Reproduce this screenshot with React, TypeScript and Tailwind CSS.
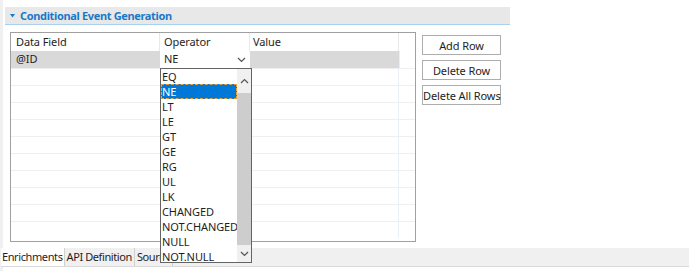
import React from 'react';

const operators = ['EQ', 'NE', 'LT', 'LE', 'GT', 'GE', 'RG', 'UL', 'LK', 'CHANGED', 'NOT.CHANGED', 'NULL', 'NOT.NULL'];

const Chevron: React.FC<{ up?: boolean }> = ({ up }) => (
  <svg width="9" height="6" viewBox="0 0 9 6" className={up ? 'rotate-180' : ''}>
    <path d="M1 1l3.5 3.5L8 1" fill="none" stroke="#555" strokeWidth="1.2" />
  </svg>
);

const App: React.FC = () => {
  const emptyRows = Array.from({ length: 10 });

  return (
    <div
      className="relative w-[689px] h-[271px] bg-white overflow-hidden text-[11px] tracking-[-0.1px] text-[#1e1e1e]"
      style={{ fontFamily: '"Noto Sans", sans-serif' }}
    >
      <div className="flex h-full">
        {/* left edge strip */}
        <div className="w-[3px] h-full bg-[#f0f0f0]" />
        <div className="flex-1 flex flex-col">
          {/* Section header */}
          <div className="ml-[2px] mt-[7px] w-[505px] h-[18px] bg-[#e8e8e8] border-b border-[#a8d0f0] flex items-center pl-[5px]">
            <svg width="5" height="4" viewBox="0 0 5 4" className="mr-[5px]">
              <path d="M0 0h5L2.5 3.5z" fill="#1a78c8" />
            </svg>
            <span className="font-bold text-[#1a78c8] text-[11px] tracking-[-0.35px] leading-none">Conditional Event Generation</span>
          </div>

          <div className="flex mt-[7px]">
            {/* Table */}
            <div className="ml-[7px] w-[406px] h-[210px] border border-[#a0a0a0] flex flex-col">
              <div className="flex h-[18px] items-center">
                <div className="w-[149px] pl-[5px] border-r border-[#e8e8e8] h-full flex items-center">Data Field</div>
                <div className="w-[90px] pl-[4px] border-r border-[#e8e8e8] h-full flex items-center">Operator</div>
                <div className="w-[149px] pl-[3px] border-r border-[#e8e8e8] h-full flex items-center">Value</div>
              </div>
              <div className="flex h-[17px] items-center">
                <div className="w-[149px] pl-[5px] h-full flex items-center bg-[#d9d9d9]">@ID</div>
                <div className="w-[90px] pl-[4px] pr-[4px] h-full flex items-center justify-between bg-white">
                  <span>NE</span>
                  <Chevron />
                </div>
                <div className="w-[149px] h-full bg-[#d9d9d9]" />
                <div className="flex-1 h-full border-l border-[#e8eef5]" />
              </div>
              {emptyRows.map((_, i) => (
                <div key={i} className="flex h-[17px] border-t border-[#efefef]">
                  <div className="w-[149px]" />
                  <div className="w-[90px]" />
                  <div className="w-[149px] border-r border-[#eaf0f7]" />
                </div>
              ))}
            </div>

            {/* Buttons */}
            <div className="ml-[6px] mt-[3px] flex flex-col gap-[5px] w-[79px]">
              <button className="h-[20px] border border-[#adadad] bg-white text-[11px] leading-none">Add Row</button>
              <button className="h-[20px] border border-[#adadad] bg-white text-[11px] leading-none">Delete Row</button>
              <button className="h-[20px] border border-[#adadad] bg-white text-[11px] leading-none whitespace-nowrap">Delete All Rows</button>
            </div>
          </div>

          {/* Tabs */}
          <div className="mt-auto mb-[4px] -ml-[2px] flex h-[19px] border-b border-[#d9d9d9] bg-[#f0f0f0] tracking-[-0.4px]">
            <div className="px-[1px] bg-white border-r border-[#d0d0d0] flex items-center whitespace-nowrap">Enrichments</div>
            <div className="px-[2px] border-r border-[#d0d0d0] flex items-center whitespace-nowrap">API Definition</div>
            <div className="px-[2px] border-r border-[#d0d0d0] flex items-center whitespace-nowrap">Source</div>
          </div>
        </div>
      </div>

      {/* Dropdown list */}
      <div className="absolute left-[160px] top-[68px] w-[92px] h-[195px] bg-white border border-[#646464] flex">
        <div className="flex-1 min-w-0 flex flex-col overflow-hidden">
          {operators.map((op) => (
            <div
              key={op}
              className={`h-[15px] leading-[15px] pl-[1px] whitespace-nowrap ${
                op === 'NE' ? 'bg-[#0078d7] text-white outline outline-1 outline-dashed outline-[#e5a040] -outline-offset-1' : ''
              }`}
            >
              {op}
            </div>
          ))}
        </div>
        <div className="w-[14px] shrink-0 bg-[#f0f0f0] flex flex-col items-center">
          <div className="h-[24px] flex items-center justify-center">
            <Chevron up />
          </div>
          <div className="w-[14px] flex-1 bg-[#cdcdcd]" />
          <div className="h-[17px] flex items-center justify-center">
            <Chevron />
          </div>
        </div>
      </div>
    </div>
  );
};

export default App;
